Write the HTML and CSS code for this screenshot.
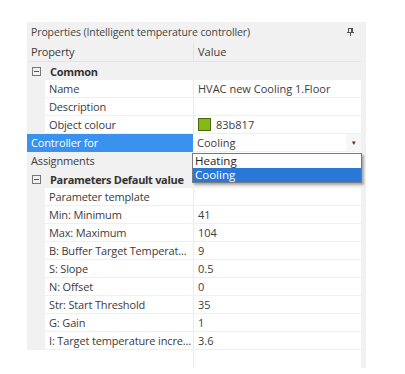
FILE: index.html
```html
<!DOCTYPE html>
<html>
<head>
<meta charset="utf-8">
<link rel="stylesheet" href="styles.css">
</head>
<body>
<div class="panel">
  <div class="title">
    <span>Properties (Intelligent temperature controller)</span>
    <svg class="pin" width="7" height="8" viewBox="0 0 7 8"><rect x="1.5" y="0.5" width="4" height="4" fill="none" stroke="#555"/><rect x="4" y="1" width="1" height="3.5" fill="#555"/><line x1="0" y1="4.5" x2="7" y2="4.5" stroke="#555"/><line x1="3.5" y1="5" x2="3.5" y2="8" stroke="#555"/></svg>
  </div>
  <div class="grid">
    <div class="row head"><div class="name">Property</div><div class="val">Value</div></div>
    <div class="row cat"><span class="box"></span><span class="cname">Common</span></div>
    <div class="row prop"><div class="name">Name</div><div class="val">HVAC new Cooling 1.Floor</div></div>
    <div class="row prop"><div class="name">Description</div><div class="val"></div></div>
    <div class="row prop"><div class="name">Object colour</div><div class="val"><span class="swatch"></span>83b817</div></div>
    <div class="row top sel"><div class="name">Controller for</div><div class="val">Cooling<span class="drop">&#9662;</span></div></div>
    <div class="row top"><div class="name">Assignments</div><div class="val"></div></div>
    <div class="row cat"><span class="box"></span><span class="cname">Parameters Default value</span></div>
    <div class="row prop"><div class="name">Parameter template</div><div class="val"></div></div>
    <div class="row prop"><div class="name">Min: Minimum</div><div class="val">41</div></div>
    <div class="row prop"><div class="name">Max: Maximum</div><div class="val">104</div></div>
    <div class="row prop"><div class="name">B: Buffer Target Temperat...</div><div class="val">9</div></div>
    <div class="row prop"><div class="name">S: Slope</div><div class="val">0.5</div></div>
    <div class="row prop"><div class="name">N: Offset</div><div class="val">0</div></div>
    <div class="row prop"><div class="name">Str: Start Threshold</div><div class="val">35</div></div>
    <div class="row prop"><div class="name">G: Gain</div><div class="val">1</div></div>
    <div class="row prop"><div class="name">I: Target temperature incre...</div><div class="val">3.6</div></div>
  </div>
  <div class="filler"><div class="val"></div></div>
  <div class="list">
    <div class="item">Heating</div>
    <div class="item on">Cooling</div>
  </div>
</div>
</body>
</html>
```

FILE: styles.css
```css
html, body { margin: 0; padding: 0; background: #fff; }
body { font-family: "Open Sans", "Noto Sans", sans-serif; font-size: 11px; color: #3c3c3c; }

.panel { position: relative; margin: 22px 0 0 27px; width: 339px; }

.title {
  height: 20px; background: #f1f1f1; display: flex; align-items: center;
  justify-content: space-between; padding: 0 12px 0 4px; font-size: 10.5px; color: #444;
  letter-spacing: -0.1px;
}
.pin { display: block; }

.grid { background: #f1f1f1; padding-right: 5px; }
.row { display: flex; height: 18px; align-items: center; }
.row .name { width: 166px; box-sizing: border-box; height: 18px; line-height: 18px; white-space: nowrap; letter-spacing: -0.15px; }
.row .val { flex: 1; box-sizing: border-box; height: 18px; line-height: 18px; padding-left: 4px; background: #fff; border-left: 1px solid #ececec; border-bottom: 1px solid #f0f0f0; display: flex; align-items: center; position: relative; }

.head { height: 20px; border-bottom: 1px solid #e4e4e4; box-sizing: border-box; }
.head .name, .head .val { height: 19px; line-height: 19px; background: #f1f1f1; border-bottom: none; padding-left: 4px; }
.head .val { border-left: 1px solid #e4e4e4; }

.cat { padding-left: 5px; }
.box { width: 7px; height: 7px; border: 1px solid #777; position: relative; margin-right: 9px; }
.box::after { content: ""; position: absolute; left: 1px; right: 1px; top: 3px; height: 1px; background: #555; }
.cname { font-weight: 700; color: #333; letter-spacing: -0.3px; }

.prop .name { margin-left: 18px; width: 148px; background: #fff; padding-left: 4px; border-bottom: 1px solid #f0f0f0; }

.top .name { padding-left: 4px; }
.sel .name { background: #3a92ee; color: #fff; }
.sel .val { border-left: none; }

.swatch { width: 11px; height: 11px; background: #83b817; border: 1px solid #4a6a10; margin-right: 5px; }
.drop { position: absolute; right: 0; top: 0; width: 15px; height: 17px; font-size: 7px; line-height: 17px; text-align: center; color: #333; background: #f7f7f7; }

.filler { padding-left: 166px; padding-right: 5px; height: 18px; background: linear-gradient(to right, transparent 166px, #f1f1f1 166px); }
.filler .val { height: 18px; background: #fff; border-left: 1px solid #ececec; }

.list {
  position: absolute; left: 165px; top: 131px; width: 168px; border: 1px solid #7a7a7a;
  background: #fff; box-shadow: 2px 2px 2px rgba(0,0,0,0.3); color: #222;
}
.item { height: 14px; line-height: 14px; padding-left: 2px; font-size: 11.5px; }
.item.on { background: #2a78d6; color: #fff; }
```
